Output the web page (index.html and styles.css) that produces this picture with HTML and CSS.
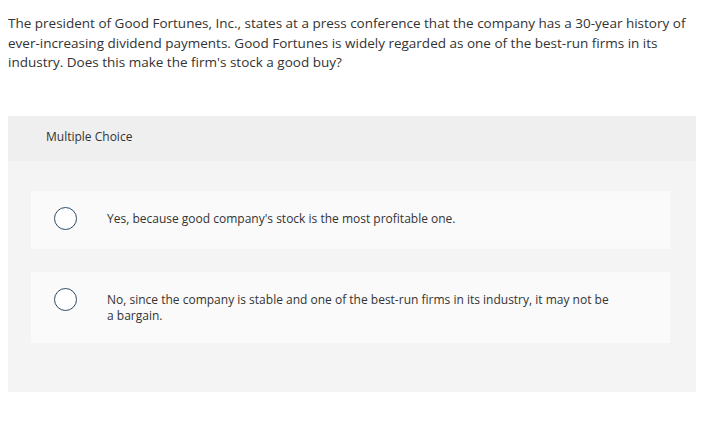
FILE: index.html
```html
<!DOCTYPE html>
<html>
<head>
<meta charset="utf-8">
<link rel="stylesheet" href="styles.css">
</head>
<body>
<div class="page">
  <p class="question">The president of Good Fortunes, Inc., states at a press conference that the company has a 30-year history of ever-increasing dividend payments. Good Fortunes is widely regarded as one of the best-run firms in its industry. Does this make the firm's stock a good buy?</p>
  <div class="panel">
    <div class="panel-head">Multiple Choice</div>
    <div class="panel-body">
      <div class="option">
        <span class="radio"></span>
        <span class="opt-text">Yes, because good company's stock is the most profitable one.</span>
      </div>
      <div class="option">
        <span class="radio"></span>
        <span class="opt-text">No, since the company is stable and one of the best-run firms in its industry, it may not be a bargain.</span>
      </div>
    </div>
  </div>
</div>
</body>
</html>
```
FILE: styles.css
```css
html, body {
  margin: 0;
  padding: 0;
  background: #ffffff;
}
body {
  font-family: "Open Sans", "Liberation Sans", sans-serif;
  color: #333333;
}
.page {
  padding: 14px 32px 0 8px;
}
.question {
  margin: 0;
  font-size: 13.5px;
  line-height: 19.5px;
  width: 690px;
}
.panel {
  margin-top: 43px;
  background: #f4f4f4;
  width: 688px;
}
.panel-head {
  background: #efefef;
  height: 45px;
  box-sizing: border-box;
  padding: 13px 0 0 38px;
  font-size: 12px;
  line-height: 16px;
}
.panel-body {
  padding: 30px 26px 49px 23px;
  display: flex;
  flex-direction: column;
  gap: 23px;
}
.option {
  background: #fafafa;
  display: flex;
  align-items: flex-start;
  padding: 20px 59px 19px 23px;
  font-size: 12px;
  line-height: 16px;
}
.radio {
  flex: none;
  width: 23px;
  height: 23px;
  border: 1.5px solid #2e4a66;
  border-radius: 50%;
  background: #ffffff;
  margin-top: -4px;
  margin-right: 30px;
  box-sizing: border-box;
}
.opt-text {
  flex: 1;
}
```
